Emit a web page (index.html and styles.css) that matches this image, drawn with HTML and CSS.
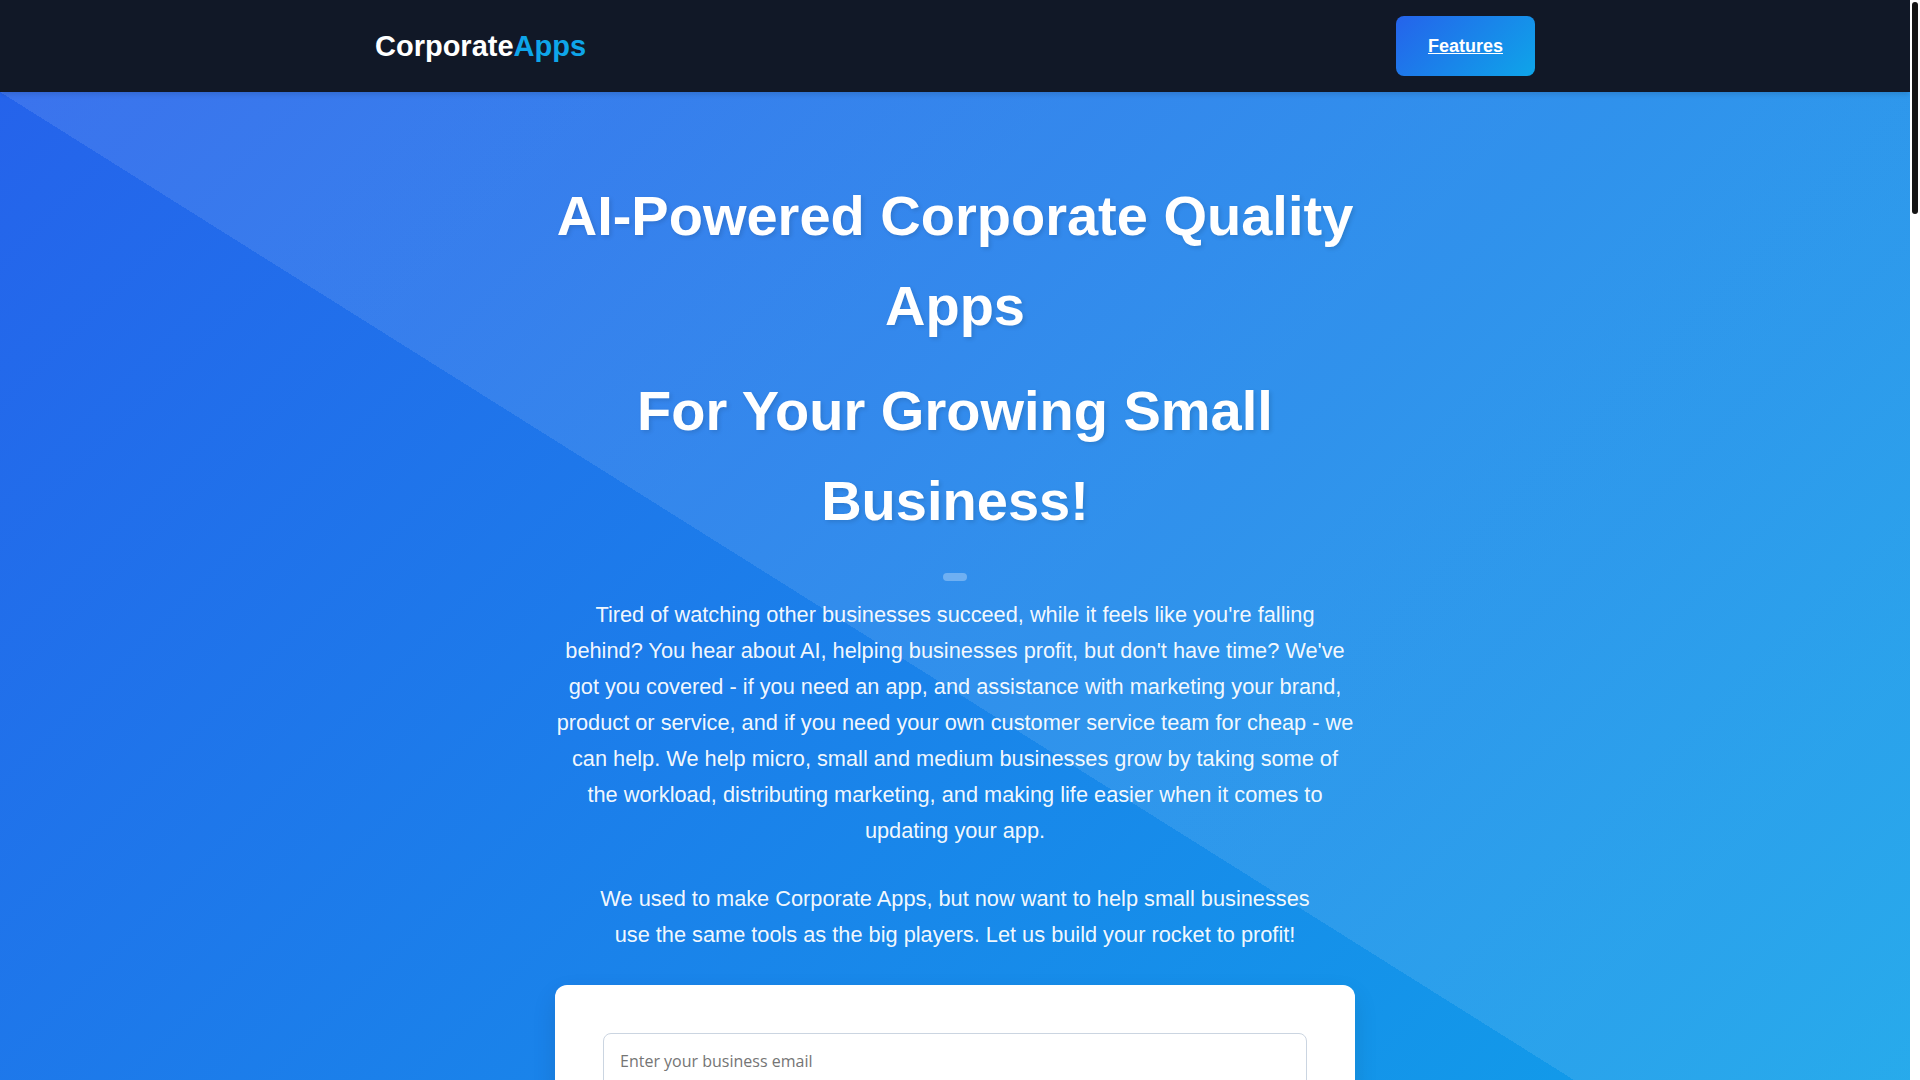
FILE: index.html
```html
<!DOCTYPE html>
<html lang="en">
<head>
<meta charset="utf-8">
<title>CorporateApps - AI-Powered Corporate Quality Apps</title>
<link rel="stylesheet" href="styles.css">
</head>
<body>
<div class="page">
  <nav class="navbar">
    <div class="container nav-inner">
      <a class="logo" href="#">Corporate<span class="logo-accent">Apps</span></a>
      <a class="nav-btn" href="#features">Features</a>
    </div>
  </nav>

  <section class="hero">
    <div class="hero-content">
      <h1 class="hero-title">AI-Powered Corporate Quality Apps</h1>
      <h2 class="hero-title hero-sub">For Your Growing Small Business!</h2>
      <div class="divider"></div>
      <p class="hero-text">Tired of watching other businesses succeed, while it feels like you're falling behind? You hear about AI, helping businesses profit, but don't have time? We've got you covered - if you need an app, and assistance with marketing your brand, product or service, and if you need your own customer service team for cheap - we can help. We help micro, small and medium businesses grow by taking some of the workload, distributing marketing, and making life easier when it comes to updating your app.</p>
      <p class="hero-text hero-text-narrow">We used to make Corporate Apps, but now want to help small businesses use the same tools as the big players. Let us build your rocket to profit!</p>
      <form class="signup-card">
        <input class="email-input" type="email" placeholder="Enter your business email">
        <button class="signup-btn" type="button">Get Started</button>
      </form>
    </div>
  </section>

  <section class="features" id="features">
    <div class="container">
      <h2 class="features-title">Features</h2>
      <div class="features-grid">
        <div class="feature-card"><h3>Custom Apps</h3><p>Corporate quality apps built for your business.</p></div>
        <div class="feature-card"><h3>Marketing</h3><p>Distribute your brand, product or service.</p></div>
        <div class="feature-card"><h3>Customer Service</h3><p>Your own support team, for cheap.</p></div>
      </div>
    </div>
  </section>

  <footer class="footer">
    <div class="container">&copy; CorporateApps</div>
  </footer>
</div>

<div class="scrollbar" aria-hidden="true"><div class="scrollbar-thumb"></div></div>
</body>
</html>
```

FILE: styles.css
```css
html {
  scrollbar-width: none;
}

html, body {
  margin: 0;
  padding: 0;
}

::-webkit-scrollbar {
  width: 0;
  height: 0;
}

body {
  font-family: "Liberation Sans", Arial, Helvetica, sans-serif;
  color: #111827;
  background: #ffffff;
}

.page {
  margin-right: 10px;
}

/* fake window scrollbar drawn over the right edge */
.scrollbar {
  position: fixed;
  top: 0;
  right: 0;
  z-index: 10;
  width: 10px;
  height: 100vh;
  background: #ffffff;
}

.scrollbar-thumb {
  margin: 2px 2px 0;
  height: 212px;
  border-radius: 3px;
  background: #151515;
}

.container {
  max-width: 1160px;
  margin: 0 auto;
  padding: 0 20px;
}

/* NAV */
.navbar {
  position: relative;
  z-index: 2;
  background: #111827;
  box-shadow: 0 4px 4px -1px rgba(0, 0, 0, 0.1);
}

.nav-inner {
  display: flex;
  align-items: center;
  justify-content: space-between;
  padding-top: 16px;
  padding-bottom: 16px;
}

.logo {
  font-size: 29px;
  font-weight: 700;
  color: #ffffff;
  text-decoration: none;
  line-height: 1.2;
}

.logo-accent {
  color: #0ea5e9;
}

.nav-btn {
  display: inline-block;
  padding: 16px 32px;
  font-size: 18px;
  line-height: 28px;
  font-weight: 700;
  color: #ffffff;
  text-decoration: underline;
  border-radius: 8px;
  background: linear-gradient(135deg, #2563eb 0%, #0ea5e9 100%);
}

/* HERO */
.hero {
  background:
    linear-gradient(to top right, rgba(255, 255, 255, 0) 50%, rgba(255, 255, 255, 0.1) 50%) left top / 100% 1199px no-repeat,
    linear-gradient(135deg, #2563eb 0%, #0ea5e9 100%);
  padding: 79px 20px 80px;
  min-height: 1040px;
}

.hero-content {
  max-width: 800px;
  margin: 0 auto;
  text-align: center;
}

.hero-title {
  margin: 0 0 16px;
  font-size: 56px;
  line-height: 1.6;
  font-weight: 700;
  color: #ffffff;
  text-shadow: 2px 2px 4px rgba(0, 0, 0, 0.12);
}

.hero-sub {
  margin-bottom: 0;
}

.divider {
  width: 24px;
  height: 8px;
  margin: 28px auto 16px;
  border-radius: 4px;
  background: rgba(255, 255, 255, 0.3);
}

.hero-text {
  margin: 0 auto;
  font-size: 21.75px;
  line-height: 36px;
  color: rgba(255, 255, 255, 0.96);
}

.hero-text-narrow {
  max-width: 720px;
  margin-top: 32px;
}

.signup-card {
  display: flex;
  flex-direction: column;
  gap: 16px;
  margin-top: 32px;
  padding: 48px;
  background: #ffffff;
  border-radius: 12px;
  box-shadow: 0 10px 25px rgba(0, 0, 0, 0.1);
}

.email-input {
  box-sizing: border-box;
  width: 100%;
  padding: 16px;
  font-family: "Open Sans", "Liberation Sans", sans-serif;
  font-size: 16px;
  color: #111827;
  border: 1px solid #cbd5e1;
  border-radius: 8px;
  outline: none;
  background: #ffffff;
}

.email-input::placeholder {
  color: #757575;
}

.signup-btn {
  padding: 16px 32px;
  font-family: "Liberation Sans", Arial, sans-serif;
  font-size: 18px;
  font-weight: 700;
  color: #ffffff;
  border: none;
  border-radius: 8px;
  background: linear-gradient(135deg, #2563eb 0%, #0ea5e9 100%);
}

/* FEATURES (below the fold) */
.features {
  padding: 96px 0;
  min-height: 3800px;
  background: #f8fafc;
}

.features-title {
  margin: 0 0 48px;
  font-size: 40px;
  text-align: center;
}

.features-grid {
  display: grid;
  grid-template-columns: repeat(3, 1fr);
  gap: 32px;
}

.feature-card {
  padding: 32px;
  background: #ffffff;
  border-radius: 12px;
  box-shadow: 0 4px 12px rgba(0, 0, 0, 0.06);
}

.feature-card h3 {
  margin: 0 0 12px;
  font-size: 22px;
}

.feature-card p {
  margin: 0;
  font-size: 16px;
  line-height: 1.6;
  color: #4b5563;
}

.footer {
  padding: 32px 0;
  background: #111827;
  color: #9ca3af;
  text-align: center;
  font-size: 14px;
}
```
